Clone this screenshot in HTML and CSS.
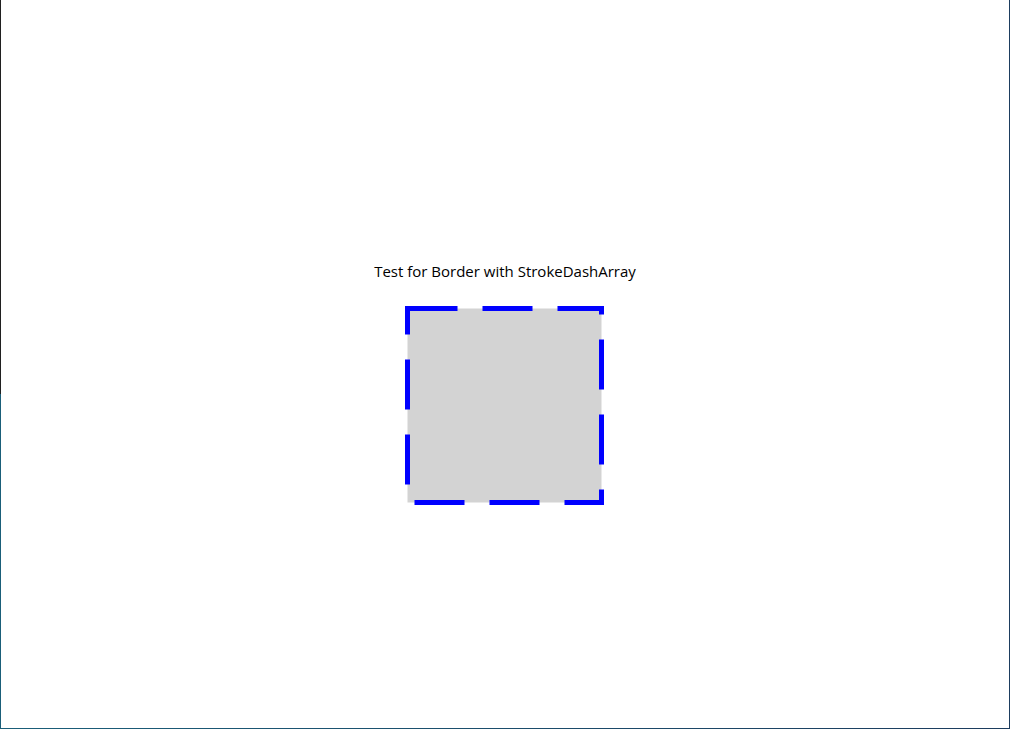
FILE: index.html
```html
<!DOCTYPE html>
<html>
<head>
<meta charset="utf-8">
<link rel="stylesheet" href="styles.css">
</head>
<body>
<div class="window">
  <div class="content">
    <div class="title">Test for Border with StrokeDashArray</div>
    <svg class="box" width="200" height="200" viewBox="0 0 200 200">
      <rect x="2.5" y="2.5" width="194" height="194" fill="#d3d3d3" stroke="#0000ff" stroke-width="5" stroke-dasharray="50 25" stroke-linejoin="miter"/>
    </svg>
  </div>
</div>
</body>
</html>
```
FILE: styles.css
```css
html, body {
  margin: 0;
  padding: 0;
  width: 1010px;
  height: 729px;
  overflow: hidden;
  background: #ffffff;
}

.window {
  box-sizing: border-box;
  width: 1010px;
  height: 729px;
  padding: 0 1px 1px 1px;
  background-color: #1d3c5e;
  background-image:
    linear-gradient(to bottom, #202020 0, #202020 394px, #1a5e79 394px, #1a5e79 100%),
    linear-gradient(to right, #1a5e79 0, #1d3c5e 100%);
  background-size: 1px 100%, 100% 100%;
  background-repeat: no-repeat;
  background-position: left top, left top;
}

.content {
  width: 100%;
  height: 100%;
  background: #ffffff;
  display: flex;
  flex-direction: column;
  align-items: center;
  padding-top: 261px;
  box-sizing: border-box;
}

.title {
  font-family: "Open Sans", "Noto Sans", sans-serif;
  font-size: 15px;
  line-height: 20px;
  color: #000000;
  height: 20px;
}

.box {
  display: block;
  margin-top: 25px;
}
```
